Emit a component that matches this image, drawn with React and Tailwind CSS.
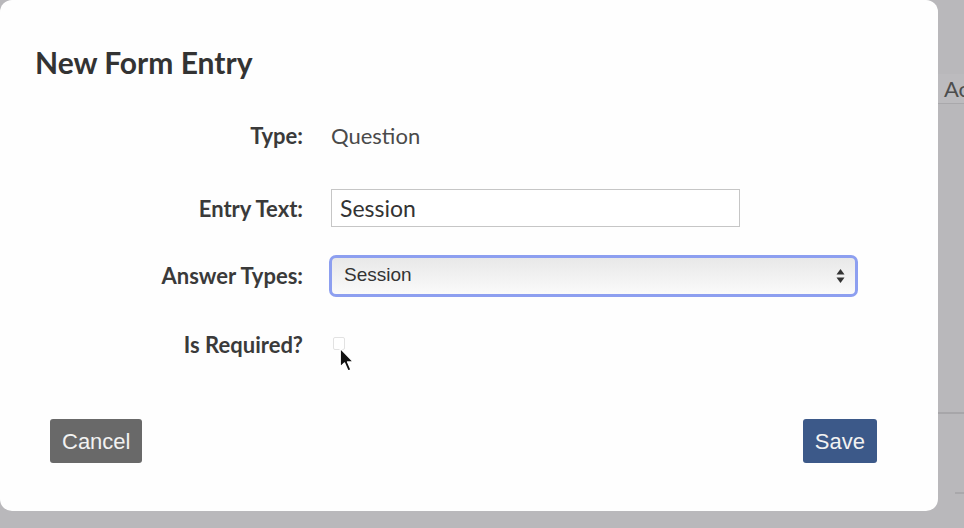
import React from 'react';

function Row({ label, className, children }) {
  return (
    <div className={`flex items-center ${className}`}>
      <div className="w-[303px] shrink-0 text-right text-[22px] font-bold text-[#3a3a3a] font-['Lato',sans-serif]">
        {label}
      </div>
      <div className="ml-[28px] flex-1 flex items-center">{children}</div>
    </div>
  );
}

export default function App() {
  return (
    <div className="w-[964px] h-[528px] bg-[#b9b8bb] flex overflow-hidden">
      <div className="w-[938px] h-[511px] shrink-0 bg-[#fefefe] rounded-[12px] flex flex-col">
        <div className="mt-[40px] h-[44px] pl-[35px] flex items-center text-[30px] font-bold text-[#333] font-['Lato',sans-serif]">
          New Form Entry
        </div>

        <Row label="Type:" className="mt-[31px] h-[40px]">
          <span className="text-[22px] text-[#4a4a4a] font-['Lato',sans-serif]">Question</span>
        </Row>

        <Row label="Entry Text:" className="mt-[33px] h-[40px]">
          <input
            readOnly
            value="Session"
            className="w-[409px] h-[38px] border border-[#c6c6c6] bg-white px-[8px] text-[23px] text-[#333] font-['Lato',sans-serif] outline-none"
          />
        </Row>

        <Row label="Answer Types:" className="mt-[27px] h-[41px]">
          <div className="-ml-[2px] w-[529px] h-[42px] rounded-[7px] border-[3px] border-[#8d9ff0] bg-gradient-to-b from-[#e8e8e8] to-[#fafafa] flex items-center pl-[12px] pr-[10px]">
            <span className="flex-1 text-[19px] text-[#333] font-['Liberation_Sans',Arial,sans-serif]">Session</span>
            <svg width="9" height="16" viewBox="0 0 9 16">
              <path d="M4.5 1 L8.5 6.5 L0.5 6.5 Z" fill="#333" />
              <path d="M4.5 15 L8.5 9.5 L0.5 9.5 Z" fill="#333" />
            </svg>
          </div>
        </Row>

        <Row label="Is Required?" className="mt-[28px] h-[40px]">
          <div className="relative">
            <div className="ml-[2px] -mt-[2px] w-[12px] h-[13px] rounded-[2px] border border-[#e2e2e2] bg-white" />
            <svg className="absolute left-[8px] top-[8px]" width="17" height="26" viewBox="0 0 17 26">
              <path d="M1.2 1.2 L1.2 20 L5.5 16 L9 24 L12 22.8 L8.6 15 L14.5 15 Z" fill="#111" stroke="#fff" strokeWidth="1.4" strokeLinejoin="round" />
            </svg>
          </div>
        </Row>

        <div className="mt-[55px] flex justify-between pl-[50px] pr-[61px]">
          <button className="h-[44px] px-[12px] rounded-[3px] bg-[#696969] text-[22px] text-[#f2f2f2] font-['Liberation_Sans',Arial,sans-serif]">
            Cancel
          </button>
          <button className="h-[44px] px-[12px] rounded-[3px] bg-[#3c5989] text-[22px] text-[#f2f2f2] font-['Liberation_Sans',Arial,sans-serif]">
            Save
          </button>
        </div>
      </div>

      <div className="flex-1 flex flex-col overflow-hidden">
        <div className="mt-[74px] h-[30px] bg-[#bcbbbe] border-b border-[#a9a8ab] pl-[6px] flex items-center text-[22px] text-[#4d4d4d] font-['Lato',sans-serif] whitespace-nowrap">
          Ac
        </div>
        <div className="mt-[308px] h-[2px] bg-[#a7a6a9]" />
        <div className="mt-[78px] ml-[17px] h-[2px] bg-[#a9a8ab]" />
      </div>
    </div>
  );
}
